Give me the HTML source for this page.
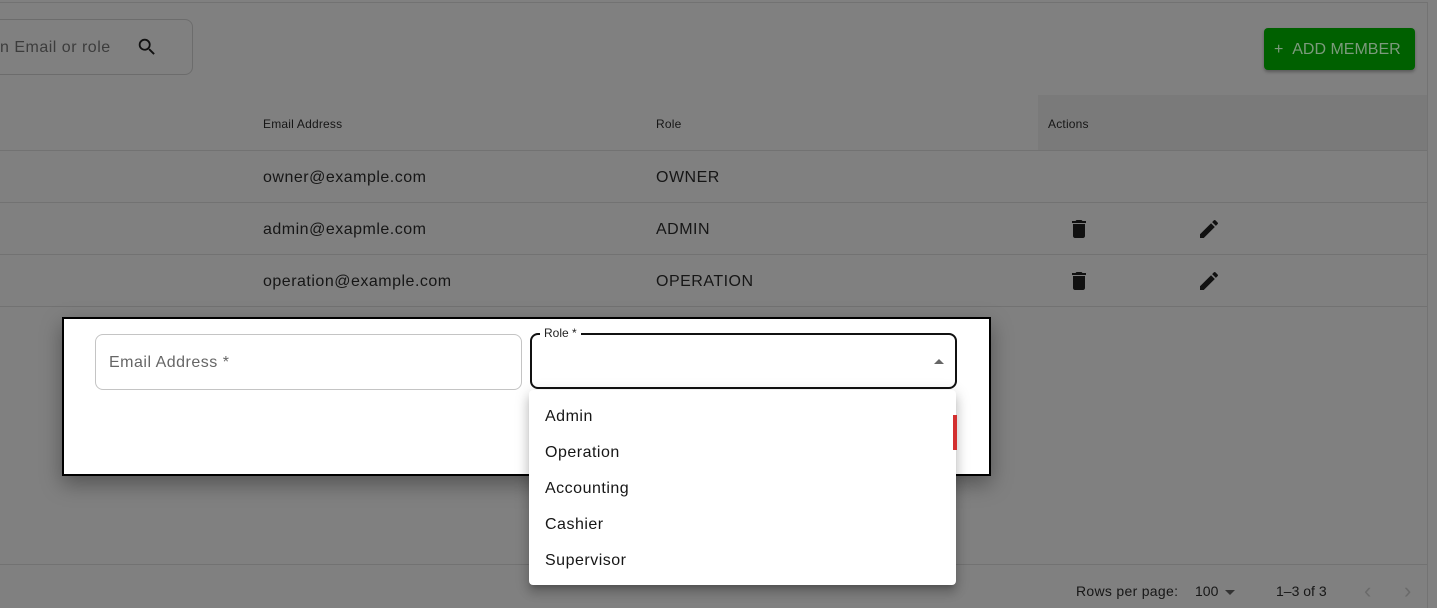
<!DOCTYPE html>
<html><head><style>
*{box-sizing:border-box;margin:0;padding:0}
body{width:1437px;height:608px;overflow:hidden;background:#808080;font-family:"Liberation Sans","DejaVu Sans",sans-serif;color:#161616;position:relative}
.a{position:absolute}
.line{position:absolute;background:#727272;height:1px}
.t14{font-size:12px;letter-spacing:.2px}
.t16{font-size:16px;letter-spacing:.5px}
</style></head><body>
<div class="line" style="left:0;top:2px;width:1428px"></div>
<div class="a" style="left:1427px;top:2px;width:1px;height:606px;background:#737373"></div>
<div class="a" style="left:-10px;top:19px;width:203px;height:56px;border:1px solid #6c6c6c;border-radius:8px"></div>
<div class="a t16" style="left:0;top:39px;color:#3c3c3c">n Email or role</div>
<svg class="a" style="left:136px;top:36px" width="22" height="22" viewBox="0 0 24 24"><path fill="#111" d="M15.5 14h-.79l-.28-.27A6.47 6.47 0 0 0 16 9.5 6.5 6.5 0 1 0 9.5 16c1.61 0 3.09-.59 4.23-1.57l.27.28v.79l5 4.99L20.49 19zm-6 0C7.01 14 5 11.99 5 9.5S7.01 5 9.5 5 14 7.01 14 9.5 11.99 14 9.5 14"/></svg>
<div class="a" style="left:1264px;top:28px;width:151px;height:42px;background:#006000;border-radius:4px;box-shadow:0 2px 3px rgba(0,0,0,.3);color:#7c9a7c;font-size:16px;line-height:44px;padding-left:10px;white-space:nowrap">+&nbsp;&nbsp;ADD MEMBER</div>
<div class="a" style="left:1038px;top:95px;width:389px;height:55px;background:#7a7a7a"></div>
<div class="line" style="left:0;top:150px;width:1427px"></div>
<div class="a t14" style="left:263px;top:117px">Email Address</div>
<div class="a t14" style="left:656px;top:117px">Role</div>
<div class="a t14" style="left:1048px;top:117px">Actions</div>
<div class="a t16" style="left:263px;top:169px">owner@example.com</div>
<div class="a t16" style="left:656px;top:169px">OWNER</div>
<div class="line" style="left:0;top:202px;width:1427px"></div>
<div class="a t16" style="left:263px;top:221px">admin@exapmle.com</div>
<div class="a t16" style="left:656px;top:221px">ADMIN</div>
<div class="line" style="left:0;top:254px;width:1427px"></div>
<div class="a t16" style="left:263px;top:273px">operation@example.com</div>
<div class="a t16" style="left:656px;top:273px">OPERATION</div>
<div class="line" style="left:0;top:306px;width:1427px"></div>
<svg class="a" style="left:1067px;top:217px" width="24" height="24" viewBox="0 0 24 24"><path fill="#111" d="M6 19c0 1.1.9 2 2 2h8c1.1 0 2-.9 2-2V7H6zM19 4h-3.5l-1-1h-5l-1 1H5v2h14z"/></svg>
<svg class="a" style="left:1197px;top:217px" width="24" height="24" viewBox="0 0 24 24"><path fill="#111" d="M3 17.25V21h3.75L17.81 9.94l-3.75-3.75zM20.71 7.04a1 1 0 0 0 0-1.41l-2.34-2.34a1 1 0 0 0-1.41 0l-1.83 1.83 3.75 3.75z"/></svg>
<svg class="a" style="left:1067px;top:269px" width="24" height="24" viewBox="0 0 24 24"><path fill="#111" d="M6 19c0 1.1.9 2 2 2h8c1.1 0 2-.9 2-2V7H6zM19 4h-3.5l-1-1h-5l-1 1H5v2h14z"/></svg>
<svg class="a" style="left:1197px;top:269px" width="24" height="24" viewBox="0 0 24 24"><path fill="#111" d="M3 17.25V21h3.75L17.81 9.94l-3.75-3.75zM20.71 7.04a1 1 0 0 0 0-1.41l-2.34-2.34a1 1 0 0 0-1.41 0l-1.83 1.83 3.75 3.75z"/></svg>
<div class="line" style="left:0;top:564px;width:1427px"></div>
<div class="a" style="left:1076px;top:583px;font-size:14px;letter-spacing:.3px">Rows per page:</div>
<div class="a" style="left:1195px;top:583px;font-size:14px">100</div>
<div class="a" style="left:1225px;top:590px;border-left:5px solid transparent;border-right:5px solid transparent;border-top:5px solid #333"></div>
<div class="a" style="left:1276px;top:583px;font-size:14px">1–3 of 3</div>
<div class="a" style="left:1364px;top:578px;font-size:22px;color:#6a6a6a">‹</div>
<div class="a" style="left:1404px;top:578px;font-size:22px;color:#6a6a6a">›</div>
<!-- dialog -->
<div class="a" style="left:62px;top:317px;width:929px;height:159px;background:#fff;border:2px solid #000;box-shadow:0 8px 20px rgba(0,0,0,.35)"></div>
<div class="a" style="left:95px;top:334px;width:427px;height:56px;border:1px solid #c4c4c4;border-radius:8px"></div>
<div class="a t16" style="left:109px;top:354px;color:#666">Email Address *</div>
<div class="a" style="left:530px;top:333px;width:427px;height:56px;border:2px solid #111;border-radius:8px"></div>
<div class="a" style="left:540px;top:326px;background:#fff;padding:0 4px;font-size:12px;color:#222">Role *</div>
<div class="a" style="left:934px;top:359px;border-left:5px solid transparent;border-right:5px solid transparent;border-bottom:5px solid #666"></div>
<div class="a" style="left:529px;top:390px;width:427px;height:195px;background:#fff;border-radius:4px;box-shadow:0 5px 5px -3px rgba(0,0,0,.2),0 8px 10px 1px rgba(0,0,0,.14),0 3px 14px 2px rgba(0,0,0,.12)"></div>
<div class="a" style="left:953px;top:415px;width:4px;height:35px;background:#d32f2f"></div>
<div class="a t16" style="left:545px;top:408px">Admin</div>
<div class="a t16" style="left:545px;top:444px">Operation</div>
<div class="a t16" style="left:545px;top:480px">Accounting</div>
<div class="a t16" style="left:545px;top:516px">Cashier</div>
<div class="a t16" style="left:545px;top:552px">Supervisor</div>
</body></html>
